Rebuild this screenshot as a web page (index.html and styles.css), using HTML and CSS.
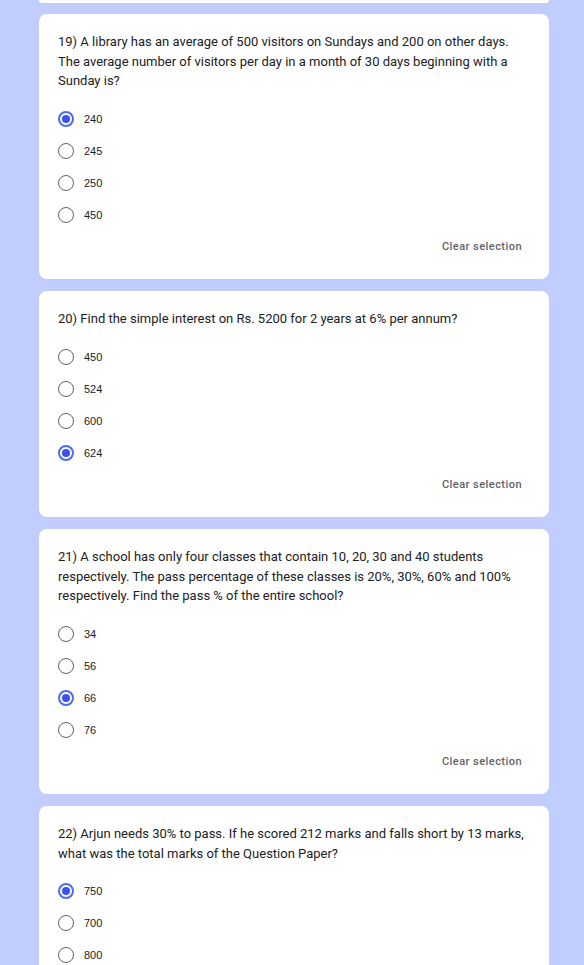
FILE: index.html
```html
<!DOCTYPE html>
<html>
<head>
<meta charset="utf-8">
<link rel="stylesheet" href="styles.css">
</head>
<body>
<div class="page">
  <div class="card stub"></div>

  <div class="card">
    <div class="question">19) A library has an average of 500 visitors on Sundays and 200 on other days. The average number of visitors per day in a month of 30 days beginning with a Sunday is?</div>
    <div class="options">
      <div class="option"><span class="radio checked"></span><span class="label">240</span></div>
      <div class="option"><span class="radio"></span><span class="label">245</span></div>
      <div class="option"><span class="radio"></span><span class="label">250</span></div>
      <div class="option"><span class="radio"></span><span class="label">450</span></div>
    </div>
    <div class="clear-row"><span class="clear">Clear selection</span></div>
  </div>

  <div class="card">
    <div class="question">20) Find the simple interest on Rs. 5200 for 2 years at 6% per annum?</div>
    <div class="options">
      <div class="option"><span class="radio"></span><span class="label">450</span></div>
      <div class="option"><span class="radio"></span><span class="label">524</span></div>
      <div class="option"><span class="radio"></span><span class="label">600</span></div>
      <div class="option"><span class="radio checked"></span><span class="label">624</span></div>
    </div>
    <div class="clear-row"><span class="clear">Clear selection</span></div>
  </div>

  <div class="card">
    <div class="question">21) A school has only four classes that contain 10, 20, 30 and 40 students respectively. The pass percentage of these classes is 20%, 30%, 60% and 100% respectively. Find the pass % of the entire school?</div>
    <div class="options">
      <div class="option"><span class="radio"></span><span class="label">34</span></div>
      <div class="option"><span class="radio"></span><span class="label">56</span></div>
      <div class="option"><span class="radio checked"></span><span class="label">66</span></div>
      <div class="option"><span class="radio"></span><span class="label">76</span></div>
    </div>
    <div class="clear-row"><span class="clear">Clear selection</span></div>
  </div>

  <div class="card">
    <div class="question">22) Arjun needs 30% to pass. If he scored 212 marks and falls short by 13 marks, what was the total marks of the Question Paper?</div>
    <div class="options">
      <div class="option"><span class="radio checked"></span><span class="label">750</span></div>
      <div class="option"><span class="radio"></span><span class="label">700</span></div>
      <div class="option"><span class="radio"></span><span class="label">800</span></div>
      <div class="option"><span class="radio"></span><span class="label">850</span></div>
    </div>
    <div class="clear-row"><span class="clear">Clear selection</span></div>
  </div>
</div>
</body>
</html>
```
FILE: styles.css
```css
html, body {
  margin: 0;
  padding: 0;
  background: #c0cdfd;
  height: 965px;
  overflow: hidden;
}
.page {
  display: flex;
  flex-direction: column;
  gap: 12.5px;
  padding-left: 39px;
  width: 510px;
}
.card {
  background: #fff;
  border-radius: 8px;
  padding: 18px 20px 17px 19px;
}
.card.stub {
  height: 3px;
  padding: 0;
  border-radius: 0 0 8px 8px;
  margin-bottom: -1.5px;
}
.question {
  font-family: Roboto, "Liberation Sans", sans-serif;
  font-size: 13px;
  line-height: 19.5px;
  color: #202124;
  margin-bottom: 12px;
}
.options {
  display: flex;
  flex-direction: column;
}
.option {
  display: flex;
  align-items: center;
  height: 32px;
}
.radio {
  box-sizing: border-box;
  width: 16px;
  height: 16px;
  border-radius: 50%;
  border: 1.5px solid #5f6368;
  margin-right: 10px;
  display: flex;
  align-items: center;
  justify-content: center;
}
.radio.checked {
  border: 2px solid #4a6cf7;
}
.radio.checked::after {
  content: "";
  width: 8px;
  height: 8px;
  border-radius: 50%;
  background: #3d4ff0;
}
.label {
  font-family: "Liberation Sans", Arial, sans-serif;
  font-size: 11px;
  color: #202124;
}
.clear-row {
  display: flex;
  justify-content: flex-end;
  align-items: center;
  height: 31px;
  padding-right: 7px;
}
.clear {
  font-family: Roboto, "Liberation Sans", sans-serif;
  font-size: 11px;
  font-weight: 500;
  color: #5f6368;
  letter-spacing: 0.45px;
}
```
